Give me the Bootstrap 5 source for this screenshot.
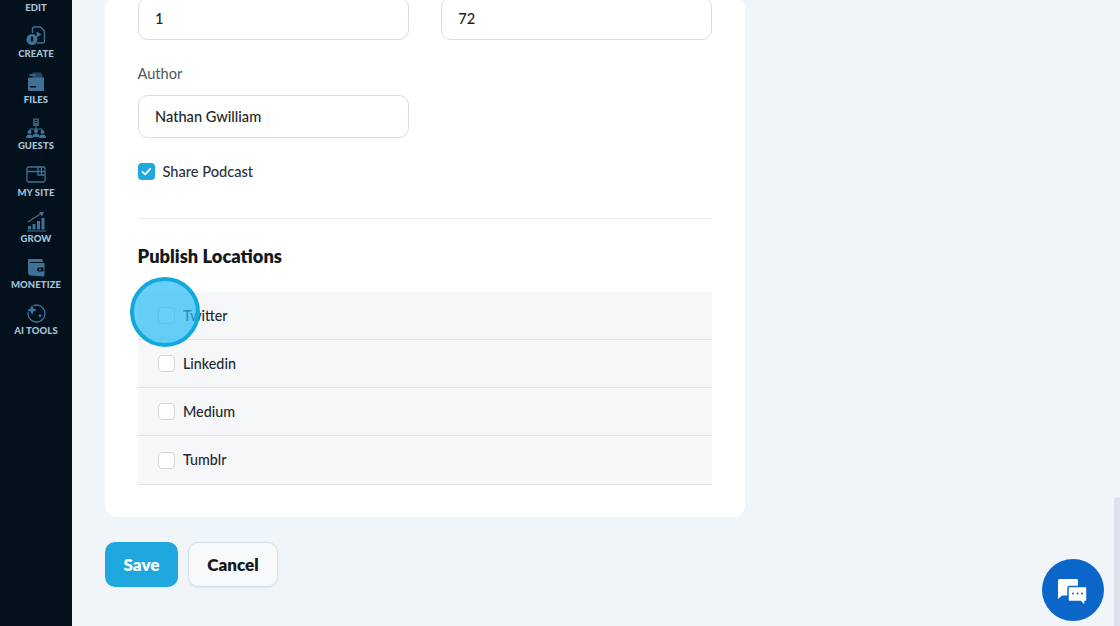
<!DOCTYPE html>
<html lang="en">
<head>
<meta charset="utf-8">
<title>Publish</title>
<link rel="stylesheet" href="https://cdn.jsdelivr.net/npm/bootstrap@5.3.0/dist/css/bootstrap.min.css">
<style>
html,body{height:626px;overflow:hidden}
body{font-family:"Lato","Liberation Sans",sans-serif;background:#f0f5f9;color:#1d2329}
.app-shell{height:626px}
.side-rail{width:72px;background:#03111d;padding-top:2px}
.rail-item{height:46.2px;color:#a3c3d9;font-size:9.5px;font-weight:900;letter-spacing:.1px;line-height:12px}
.rail-item svg{width:22px;height:22px;margin-bottom:1px;color:#3f7298;display:block}
.rail-first{height:12px;margin-bottom:11px}
.work-pane{height:626px;padding-left:33px;padding-bottom:39px}
.form-sheet{width:640px;background:#fff;border-radius:12px;padding:0 33px 32px 32.5px}
.field-col{width:271.25px}
.form-grid{gap:32px}
.text-box{height:43px;border:1px solid #d3dde6;border-radius:10px;padding:0 16.5px;font-size:14.6px;font-weight:500;color:#1d2329;background:#fff;line-height:42px}
.field-label{font-size:14.6px;color:#4c5762;line-height:20px;margin:24px 0 11px}
.share-row{margin-top:25px;height:16px;gap:8px;font-size:14.6px;font-weight:500;color:#2a3138;line-height:17px}
.tick-box{width:17px;height:17px;border-radius:4px;background:#1fa8e0;flex:none}
.tick-box svg{display:block}
.rule-line{border:0;border-top:1px solid #e9edf1;opacity:1;margin:39px 0 24px}
.section-title{font-size:18.3px;font-weight:800;line-height:26px;color:#14191e;margin:0 0 23px}
.loc-row{height:48px;border-bottom:1px solid #dfe2e6;padding-left:20.5px;gap:8px;font-size:14.3px;font-weight:500;color:#22292f;background:#f6f7f9}
.loc-row:last-child{height:49px}
.empty-box{width:17px;height:17px;border:1px solid #ccd6df;border-radius:4px;background:#fff;flex:none}
.act-save,.act-cancel{height:45px;border-radius:10px;font-size:17px;font-weight:800;padding:0}
.act-save{width:73px;background:#1fa8e0;border:0;color:#fff}
.act-cancel{width:90px;background:#f8f9fa;border:1px solid #d8e0e7;color:#14191e;box-shadow:0 1px 2px rgba(30,50,70,.08)}
.act-row{margin-top:25px;gap:10px}
.spot-ring{position:absolute;left:130px;top:277px;width:70px;height:70px;border-radius:50%;border:4px solid #12a8de;background:rgba(40,188,245,.7)}
.chat-bubble{position:absolute;left:1042px;top:559px;width:62px;height:62px;border-radius:50%;background:#0a66c8}
.scroll-track{position:absolute;right:0;top:0;width:6px;height:626px;background:#f1f5fa}
.scroll-thumb{position:absolute;left:0;top:497px;width:6px;height:129px;background:#dde1ec;border-radius:3px 3px 0 0}
</style>
</head>
<body>
<div class="app-shell d-flex position-relative">
  <nav class="side-rail d-flex flex-column align-items-center flex-shrink-0">
    <div class="rail-first rail-item w-100 text-center">EDIT</div>
    <div class="rail-item d-flex flex-column align-items-center">
      <svg viewBox="0 0 22 22" fill="none" stroke="currentColor" stroke-width="1.4"><path d="M7.500 8V4a2 2 0 0 1 2-2h6l4 4v10a2 2 0 0 1-2 2h-5.500"/><path d="M11.500 6.500v6l5-3z" fill="currentColor" stroke="none"/><circle cx="7" cy="14.500" r="5.500" fill="currentColor" stroke="none"/><rect x="5.800" y="11.500" width="2.400" height="5" rx="1.200" fill="#03111d" stroke="none"/></svg>
      <span>CREATE</span>
    </div>
    <div class="rail-item d-flex flex-column align-items-center">
      <svg viewBox="0 0 22 22" fill="currentColor"><path d="M4 5a2 2 0 0 1 2-2h4l1.500 2H4z" opacity=".8"/><path d="M7.500 1.500h8l2 2V8h-10z" opacity=".55"/><path d="M3 8a1.500 1.500 0 0 1 1.500-1.500H19V20H4.500A1.500 1.500 0 0 1 3 18.500z"/><rect x="5" y="15" width="6" height="1.500" fill="#03111d"/></svg>
      <span>FILES</span>
    </div>
    <div class="rail-item d-flex flex-column align-items-center">
      <svg viewBox="0 0 22 22" fill="currentColor"><path d="M8 1.500h6v7.500H8z" opacity=".8"/><path d="M9.500 3.500h3M9.500 5.500h3" stroke="#03111d" stroke-width=".8"/><path d="M11 9v3M5 14v-2h12v2" fill="none" stroke="currentColor" stroke-width="1"/><circle cx="4.500" cy="15" r="2"/><path d="M1 21c0-2.500 1.500-3.500 3.500-3.500S8 18.500 8 21z"/><circle cx="11" cy="14" r="2"/><path d="M7.500 20c0-2.500 1.500-3.500 3.500-3.500s3.500 1 3.500 3.500z"/><circle cx="17.500" cy="15" r="2"/><path d="M14 21c0-2.500 1.500-3.500 3.500-3.500S21 18.500 21 21z"/></svg>
      <span>GUESTS</span>
    </div>
    <div class="rail-item d-flex flex-column align-items-center">
      <svg viewBox="0 0 22 22" fill="none" stroke="currentColor" stroke-width="1.300"><path d="M3.500 3h15A1.500 1.500 0 0 1 20 4.500v12a1.500 1.500 0 0 1-1.500 1.500h-15A1.500 1.500 0 0 1 2 16.500v-12A1.500 1.500 0 0 1 3.500 3z"/><path d="M2 7.500h18M13 3v8h7M16.500 3v8"/></svg>
      <span>MY SITE</span>
    </div>
    <div class="rail-item d-flex flex-column align-items-center">
      <svg viewBox="0 0 22 22" fill="currentColor"><rect x="3" y="16" width="3" height="3.500"/><rect x="7.500" y="14" width="3" height="5.500"/><rect x="12" y="11" width="3" height="8.500"/><rect x="16.500" y="8" width="3" height="11.500"/><path d="M2 21h19" stroke="currentColor" stroke-width="1"/><path d="M3 12 16 3.500" stroke="currentColor" stroke-width="1.100" fill="none"/><path d="M14 2h5l-2 4.500z"/></svg>
      <span>GROW</span>
    </div>
    <div class="rail-item d-flex flex-column align-items-center">
      <svg viewBox="0 0 22 22" fill="currentColor"><path d="M3 4.500 3.500 3H17l1.500 3H5v1h14.500v12a1.500 1.500 0 0 1-1.500 1.500l-12-1A3 3 0 0 1 3 17z"/><path d="M14 11.500h4.500v4H14a2 2 0 0 1 0-4z" fill="#03111d"/><circle cx="15" cy="13.500" r="1"/></svg>
      <span>MONETIZE</span>
    </div>
    <div class="rail-item d-flex flex-column align-items-center">
      <svg viewBox="0 0 22 22" fill="none" stroke="currentColor" stroke-width="1.300"><circle cx="11.500" cy="11.500" r="8.500"/><path d="M7 1.500 8.800 6.200 13.500 8 8.800 9.800 7 14.500 5.200 9.800.5 8 5.200 6.200z" fill="currentColor" stroke="#03111d" stroke-width="1"/><path d="M15 10l1 2.800 2.800 1-2.800 1L15 17.500l-1-2.700-2.800-1 2.800-1z" fill="currentColor" stroke="#03111d" stroke-width="1"/></svg>
      <span>AI TOOLS</span>
    </div>
  </nav>
  <main class="work-pane flex-grow-1 d-flex flex-column justify-content-end overflow-hidden">
    <section class="form-sheet">
      <div class="d-flex form-grid">
        <div class="field-col text-box">1</div>
        <div class="field-col text-box">72</div>
      </div>
      <div class="field-label">Author</div>
      <div class="field-col text-box">Nathan Gwilliam</div>
      <div class="share-row d-flex align-items-center">
        <span class="tick-box"><svg viewBox="0 0 17 17" width="17" height="17" fill="none" stroke="#fff" stroke-width="1.800" stroke-linecap="round" stroke-linejoin="round"><path d="m4.500 8.800 2.700 2.500 5-5.400"/></svg></span>
        <span>Share Podcast</span>
      </div>
      <hr class="rule-line">
      <h2 class="section-title">Publish Locations</h2>
      <div>
        <div class="loc-row d-flex align-items-center"><span class="empty-box"></span><span>Twitter</span></div>
        <div class="loc-row d-flex align-items-center"><span class="empty-box"></span><span>Linkedin</span></div>
        <div class="loc-row d-flex align-items-center"><span class="empty-box"></span><span>Medium</span></div>
        <div class="loc-row d-flex align-items-center"><span class="empty-box"></span><span>Tumblr</span></div>
      </div>
    </section>
    <div class="act-row d-flex">
      <button type="button" class="btn act-save">Save</button>
      <button type="button" class="btn act-cancel">Cancel</button>
    </div>
  </main>
  <div class="spot-ring"></div>
  <div class="scroll-track"><div class="scroll-thumb"></div></div>
  <div class="chat-bubble d-flex align-items-center justify-content-center">
    <svg viewBox="0 0 32 32" width="32" height="32"><path d="M1 6.500A1.500 1.500 0 0 1 2.500 5h17A1.500 1.500 0 0 1 21 6.500V20a1.500 1.500 0 0 1-1.500 1.500H5L1 25z" fill="#fff"/><path d="M12.500 12.500h16A1.500 1.500 0 0 1 30 14v12a1.500 1.500 0 0 1-1.500 1.500H28V32l-4.500-4.500h-11A1.500 1.500 0 0 1 11 26V14a1.500 1.500 0 0 1 1.500-1.500z" fill="#fff" stroke="#0a66c8" stroke-width="1.500"/><circle cx="16" cy="19.500" r="1" fill="#0a66c8"/><circle cx="20.500" cy="19.500" r="1" fill="#0a66c8"/><circle cx="25" cy="19.500" r="1" fill="#0a66c8"/></svg>
  </div>
</div>
<script src="https://cdn.jsdelivr.net/npm/bootstrap@5.3.0/dist/js/bootstrap.bundle.min.js"></script>
</body>
</html>
